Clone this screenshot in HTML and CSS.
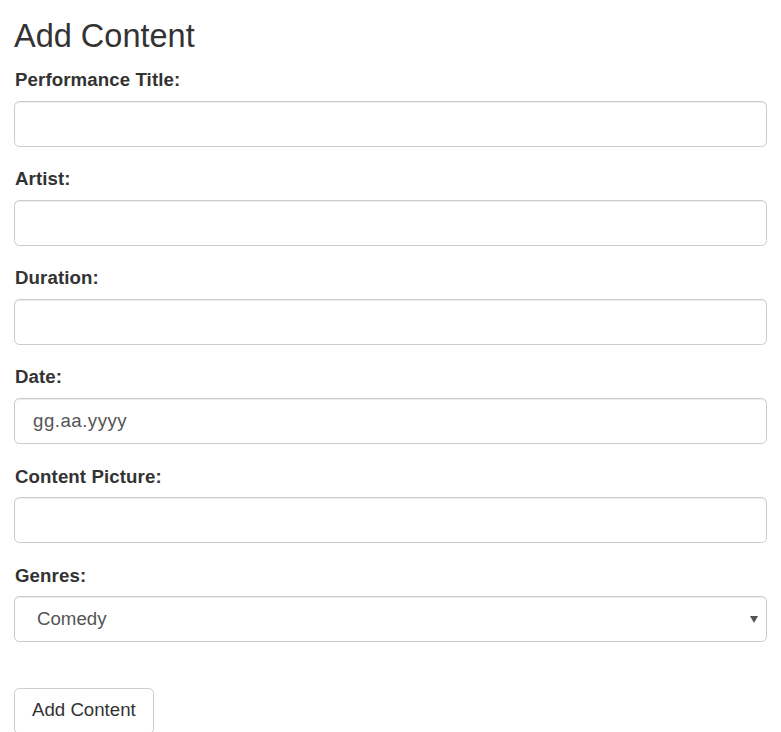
FILE: index.html
```html
<!DOCTYPE html>
<html>
<head>
<meta charset="utf-8">
<title>Add Content</title>
<link rel="stylesheet" href="styles.css">
</head>
<body>
<div class="page">
  <h3 class="title">Add Content</h3>
  <form class="form">
    <div class="group">
      <label class="label" for="t">Performance Title:</label>
      <input class="control" id="t" type="text">
    </div>
    <div class="group">
      <label class="label" for="a">Artist:</label>
      <input class="control" id="a" type="text">
    </div>
    <div class="group">
      <label class="label" for="d">Duration:</label>
      <input class="control" id="d" type="text">
    </div>
    <div class="group">
      <label class="label" for="dt">Date:</label>
      <input class="control date" id="dt" type="text" placeholder="gg.aa.yyyy">
    </div>
    <div class="group">
      <label class="label" for="p">Content Picture:</label>
      <input class="control" id="p" type="text">
    </div>
    <div class="group">
      <label class="label" for="g">Genres:</label>
      <div class="select-wrap">
        <select class="control select" id="g">
          <option>Comedy</option>
          <option>Drama</option>
          <option>Music</option>
        </select>
        <span class="arrow"></span>
      </div>
    </div>
    <button class="btn" type="button">Add Content</button>
  </form>
</div>
</body>
</html>
```

FILE: styles.css
```css
* { box-sizing: border-box; }
html, body { margin: 0; padding: 0; background: #fff; }
body {
  font-family: "Liberation Sans", Arial, Helvetica, sans-serif;
  font-size: 18.67px;
  line-height: 1.42857;
  color: #333;
}
.page {
  padding: 18.5px 14px 0 14px;
}
.title {
  margin: 0 0 13px 0;
  font-size: 32.5px;
  font-weight: 500;
  line-height: 1.1;
}
.form { margin: 0; }
.group {
  margin-bottom: 19.75px;
}
.label {
  display: block;
  font-weight: bold;
  margin-bottom: 6.67px;
  padding-left: 1px;
  letter-spacing: 0.1px;
  max-width: 100%;
}
.control {
  display: block;
  width: 100%;
  height: 46px;
  padding: 8px 16px;
  font-family: inherit;
  font-size: 18.67px;
  line-height: 1.42857;
  color: #555;
  background: #fff;
  border: 1px solid #ccc;
  border-radius: 5.33px;
  box-shadow: inset 0 1px 1px rgba(0,0,0,.075);
  outline: none;
  margin: 0;
}
.date {
  padding-left: 18px;
  letter-spacing: 0.5px;
}
.date::placeholder { color: #555; opacity: 1; }
.select-wrap { position: relative; }
.select {
  -webkit-appearance: none;
  appearance: none;
  padding-left: 22px;
}
.arrow {
  position: absolute;
  right: 9px;
  top: 20px;
  width: 0;
  height: 0;
  border-left: 4px solid transparent;
  border-right: 4px solid transparent;
  border-top: 7px solid #555;
  pointer-events: none;
}
.btn {
  display: inline-block;
  margin-top: 26px;
  height: 46px;
  padding: 8px 17px;
  font-family: inherit;
  font-size: 18.67px;
  line-height: 1.42857;
  color: #333;
  background: #fff;
  border: 1px solid #ccc;
  border-radius: 5.33px;
  cursor: pointer;
}
```
